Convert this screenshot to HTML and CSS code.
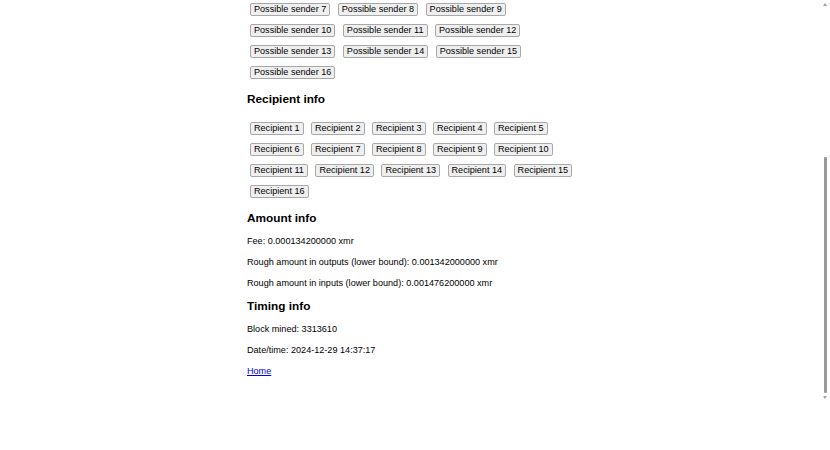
FILE: index.html
```html
<!DOCTYPE html>
<html lang="en">
<head>
  <meta charset="UTF-8">
  <title>Transaction details</title>
  <link rel="stylesheet" href="styles.css">
</head>
<body>
  <div class="page">
    <div class="chips">
      <button>Possible sender 7</button>
      <button>Possible sender 8</button>
      <button>Possible sender 9</button>
      <button>Possible sender 10</button>
      <button>Possible sender 11</button>
      <button>Possible sender 12</button>
      <button>Possible sender 13</button>
      <button>Possible sender 14</button>
      <button>Possible sender 15</button>
      <button>Possible sender 16</button>
    </div>

    <h3>Recipient info</h3>
    <div class="chips">
      <button>Recipient 1</button>
      <button>Recipient 2</button>
      <button>Recipient 3</button>
      <button>Recipient 4</button>
      <button>Recipient 5</button>
      <button>Recipient 6</button>
      <button>Recipient 7</button>
      <button>Recipient 8</button>
      <button>Recipient 9</button>
      <button>Recipient 10</button>
      <button>Recipient 11</button>
      <button>Recipient 12</button>
      <button>Recipient 13</button>
      <button>Recipient 14</button>
      <button>Recipient 15</button>
      <button>Recipient 16</button>
    </div>

    <h3>Amount info</h3>
    <p>Fee: 0.000134200000 xmr</p>
    <p>Rough amount in outputs (lower bound): 0.001342000000 xmr</p>
    <p>Rough amount in inputs (lower bound): 0.001476200000 xmr</p>

    <h3>Timing info</h3>
    <p>Block mined: 3313610</p>
    <p>Date/time: 2024-12-29 14:37:17</p>
    <p><a href="#">Home</a></p>
  </div>

  <!-- overlay scrollbar -->
  <div class="scrollbar">
    <span class="arrow up"></span>
    <span class="thumb"></span>
    <span class="arrow down"></span>
  </div>
</body>
</html>
```

FILE: styles.css
```css
body {
  margin: 0;
  font-family: 'Liberation Sans', Arial, sans-serif;
  font-size: 9.1px;
  color: #000;
  background: #fff;
}

.page {
  width: 336px;
  margin: 0 auto;
}

.chips {
  display: flex;
  flex-wrap: wrap;
  column-gap: 7.5px;
  row-gap: 8px;
  padding: 3px 0 3px 3px;
}

h3 + .chips {
  padding-top: 5px;
}

.chips button {
  font-family: inherit;
  font-size: 9.1px;
  line-height: 11px;
  height: 13px;
  padding: 0 3px;
  margin: 0;
  color: #000;
  background-color: #efefef;
  border: 1px solid #a8a8a8;
  border-radius: 2px;
}

h3 {
  font-size: 11.8px;
  line-height: 14px;
  margin: 10px 0 11px;
}

p {
  line-height: 11px;
  margin: 10px 0;
}

a {
  color: #0000ee;
}

/* Scrollbar */
.scrollbar {
  position: fixed;
  top: 0;
  right: 0;
  width: 8px;
  height: 400px;
}

.scrollbar .thumb {
  position: absolute;
  left: 2px;
  top: 157px;
  width: 3px;
  height: 236px;
  background-color: #999;
  border-radius: 1px;
}

.scrollbar .arrow {
  position: absolute;
  left: 1px;
  width: 0;
  height: 0;
  border-left: 2.5px solid transparent;
  border-right: 2.5px solid transparent;
}

.scrollbar .arrow.up {
  top: 3px;
  border-bottom: 3px solid #a0a0a0;
}

.scrollbar .arrow.down {
  top: 396px;
  border-top: 3px solid #a0a0a0;
}
```
